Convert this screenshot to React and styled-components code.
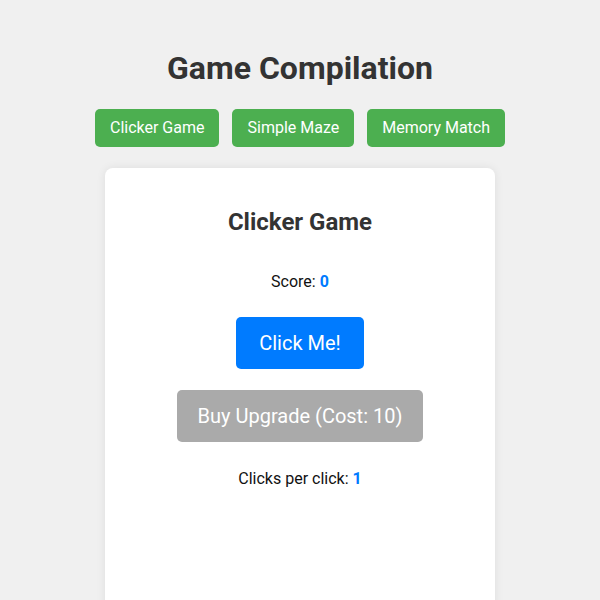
import styled, { createGlobalStyle } from "styled-components";

const GlobalStyle = createGlobalStyle`
  body {
    margin: 8px;
    background: #f0f0f0;
    font-family: Roboto, "Liberation Sans", Arial, sans-serif;
    color: #333;
  }
`;

const Page = styled.div`
  padding: 20px;
  display: flex;
  flex-direction: column;
  align-items: center;
`;

const Title = styled.h1`
  font-size: 32px;
  font-weight: 700;
  margin: 22px 0;
  line-height: 37px;
  color: #333;
`;

const Nav = styled.nav`
  display: flex;
  gap: 13px;
  margin-bottom: 21px;
`;

const NavButton = styled.button`
  background: #4caf50;
  color: #fff;
  border: none;
  border-radius: 5px;
  padding: 10px 15px;
  font-family: inherit;
  font-size: 16px;
  line-height: 18px;
  cursor: pointer;
`;

const Card = styled.div`
  width: 350px;
  min-height: 460px;
  padding: 20px;
  background: #fff;
  border-radius: 8px;
  box-shadow: 0 0 10px rgba(0, 0, 0, 0.08);
  display: flex;
  flex-direction: column;
  align-items: center;
`;

const CardTitle = styled.h2`
  font-size: 24px;
  font-weight: 700;
  line-height: 28px;
  margin: 20px 0 0;
  color: #333;
`;

const Stat = styled.p`
  font-size: 16px;
  line-height: 19px;
  color: #111;
  margin: ${(p) => p.$top}px 0 0;
`;

const Value = styled.span`
  color: #007bff;
  font-weight: 700;
`;

const ActionButton = styled.button`
  background: ${(p) => (p.disabled ? "#aaa" : "#007bff")};
  color: #fff;
  border: none;
  border-radius: 5px;
  padding: 15px ${(p) => p.$padX || 20}px;
  font-family: inherit;
  font-size: 20px;
  line-height: 22px;
  margin-top: ${(p) => p.$top}px;
  cursor: ${(p) => (p.disabled ? "not-allowed" : "pointer")};
`;

export default function App() {
  return (
    <>
      <GlobalStyle />
      <Page>
        <Title>Game Compilation</Title>
        <Nav>
          <NavButton>Clicker Game</NavButton>
          <NavButton>Simple Maze</NavButton>
          <NavButton>Memory Match</NavButton>
        </Nav>
        <Card>
          <CardTitle>Clicker Game</CardTitle>
          <Stat $top={36}>
            Score: <Value>0</Value>
          </Stat>
          <ActionButton $top={26} $padX={23}>
            Click Me!
          </ActionButton>
          <ActionButton $top={21} $padX={21} disabled>
            Buy Upgrade (Cost: 10)
          </ActionButton>
          <Stat $top={27}>
            Clicks per click: <Value>1</Value>
          </Stat>
        </Card>
      </Page>
    </>
  );
}
